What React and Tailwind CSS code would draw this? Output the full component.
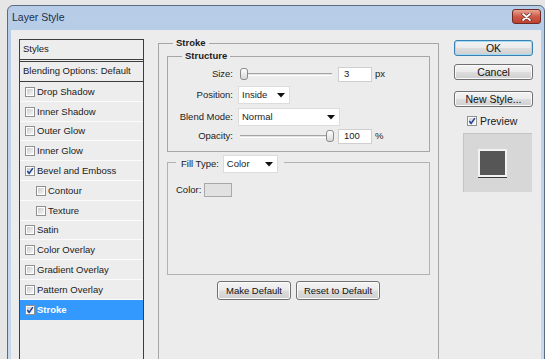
import React from "react";

const FONT = { fontFamily: '"Liberation Sans", Arial, sans-serif' };

function Check({ checked }) {
  return (
    <span className="relative inline-flex w-[10px] h-[10px] shrink-0 border border-[#8e8f8f] bg-white p-[1px]">
      <span className="flex-1 bg-gradient-to-br from-[#cdcdcd] to-[#f7f7f7]" />
      {checked && (
        <svg className="absolute left-0 top-0" width="8" height="8" viewBox="0 0 8 8">
          <path d="M1.3 4.1 L3.1 6.4 L6.9 1.1" fill="none" stroke="#21449a" strokeWidth="1.6" />
        </svg>
      )}
    </span>
  );
}

function Row({ label, checked, indent, selected, short }) {
  return (
    <div
      className={`flex items-center gap-[2px] border-b ${short ? "h-[19px]" : "h-[20px]"} ${
        selected ? "bg-[#3399ff] border-[#3399ff] text-white font-bold" : "border-[#fbfbfb] text-[#1b1b1b]"
      } ${indent ? "pl-[16px]" : "pl-[5px]"}`}
    >
      <Check checked={checked} />
      <span className="leading-none">{label}</span>
    </div>
  );
}

function Arrow() {
  return (
    <svg width="8" height="5" viewBox="0 0 8 5">
      <path d="M0 0 H8 L4 4.5 Z" fill="#111" />
    </svg>
  );
}

function Select({ value, w }) {
  return (
    <div className={`flex items-center justify-between h-[18px] ${w} bg-white border border-[#dcdcdc] pl-[3px] pr-[4px]`}>
      <span className="leading-none">{value}</span>
      <Arrow />
    </div>
  );
}

function Slider({ right }) {
  return (
    <div className="relative w-[96px] h-[16px] flex items-center">
      <div className="mx-[2px] flex-1 h-[3px] border-t border-[#a4a4a4] border-b border-b-white bg-[#e2e2e2]" />
      <span
        className={`absolute top-[2px] ${right ? "left-[88px]" : "left-[2px]"} w-[8px] h-[12px] rounded-[3px] border border-[#8a8a8a] bg-gradient-to-b from-white to-[#d8d8d8]`}
      />
    </div>
  );
}

function Input({ value }) {
  return (
    <div className="flex items-center w-[34px] h-[15px] bg-white border border-[#cfcfcf] pl-[5px] leading-none">
      {value}
    </div>
  );
}

function Btn({ children, w, ok, big }) {
  return (
    <div
      className={`flex items-center justify-center ${w} ${big ? "h-[16px]" : "h-[19px]"} rounded-[3px] border ${
        ok ? "border-[#3c7fb1] shadow-[inset_0_0_0_1px_#9fdcf6]" : "border-[#707070] shadow-[inset_0_0_0_1px_#fbfbfb]"
      } bg-[linear-gradient(to_bottom,#f3f3f3_0%,#ebebeb_48%,#dddddd_52%,#cfcfcf_100%)] text-[#111] leading-none`}
    >
      {children}
    </div>
  );
}

export default function App() {
  return (
    <div className="w-[545px] h-[359px] overflow-hidden bg-[#e6e6e6] text-[9.5px] text-[#1b1b1b]" style={FONT}>
      <div className="ml-[7px] mt-[5px] w-[538px] h-[420px] rounded-t-[6px] border border-[#5b6b80] bg-gradient-to-b from-[#b6cce7] to-[#cbdbee] px-[3px] flex flex-col">
        {/* title bar */}
        <div className="h-[24px] flex items-start justify-between shrink-0">
          <span className="mt-[4px] pl-[1px] text-[10.5px] leading-[14px] text-[#1e3048]">Layer Style</span>
          <div className="mt-[3px] w-[29px] h-[15px] rounded-[3px] border border-[#6e2b25] bg-gradient-to-b from-[#e8a493] via-[#cf5a48] to-[#c0402f] flex items-center justify-center">
            <svg width="11" height="8" viewBox="0 0 11 8">
              <path d="M2 1 L9 7 M9 1 L2 7" stroke="#5b2a25" strokeWidth="3.2" strokeLinecap="round" />
              <path d="M2 1 L9 7 M9 1 L2 7" stroke="#ffffff" strokeWidth="1.8" strokeLinecap="round" />
            </svg>
          </div>
        </div>

        {/* client area */}
        <div className="flex-1 bg-[#ececec] flex items-start pl-[8px] pt-[9px]">
          {/* left styles panel */}
          <div className="w-[125px] h-[400px] shrink-0 border border-[#3d3d3d] bg-[#ededed]">
            <div className="h-[19px] flex items-center pl-[3px]">Styles</div>
            <div className="h-[3px] border-y border-[#3d3d3d]" />
            <div className="h-[20px] flex items-center pl-[3px] border-b border-[#3d3d3d]">Blending Options: Default</div>
            <Row label="Drop Shadow" />
            <Row label="Inner Shadow" />
            <Row label="Outer Glow" short />
            <Row label="Inner Glow" />
            <Row label="Bevel and Emboss" checked />
            <Row label="Contour" indent />
            <Row label="Texture" indent />
            <Row label="Satin" short />
            <Row label="Color Overlay" />
            <Row label="Gradient Overlay" />
            <Row label="Pattern Overlay" />
            <Row label="Stroke" checked selected />
          </div>

          {/* middle stroke group */}
          <fieldset className="ml-[14px] mt-[-2px] w-[281px] h-[400px] shrink-0 border border-[#a6a6a6]">
            <legend className="ml-[14px] px-[3px] font-bold leading-[12px]">Stroke</legend>

            <fieldset className="mx-[8px] mt-[1px] border border-[#a6a6a6] pb-[7px]">
              <legend className="ml-[14px] px-[3px] font-bold leading-[12px]">Structure</legend>

              <div className="mt-[4px] h-[16px] flex items-center">
                <span className="w-[65px] text-right">Size:</span>
                <div className="ml-[5px]">
                  <Slider />
                </div>
                <div className="ml-[4px]">
                  <Input value="3" />
                </div>
                <span className="ml-[3px]">px</span>
              </div>

              <div className="mt-[4px] h-[18px] flex items-center">
                <span className="w-[65px] text-right">Position:</span>
                <div className="ml-[5px]">
                  <Select value="Inside" w="w-[52px]" />
                </div>
              </div>

              <div className="mt-[4px] h-[18px] flex items-center">
                <span className="w-[65px] text-right">Blend Mode:</span>
                <div className="ml-[5px]">
                  <Select value="Normal" w="w-[102px]" />
                </div>
              </div>

              <div className="mt-[2px] h-[16px] flex items-center">
                <span className="w-[65px] text-right">Opacity:</span>
                <div className="ml-[5px]">
                  <Slider right />
                </div>
                <div className="ml-[4px]">
                  <Input value="100" />
                </div>
                <span className="ml-[3px]">%</span>
              </div>
            </fieldset>

            <fieldset className="mx-[8px] mt-[3px] h-[120px] border border-[#b2b2b2]">
              <legend className="ml-[8px] pl-[5px] pr-[6px] h-[14px]">
                <div className="flex items-center gap-[4px] h-[18px]">
                  <span>Fill Type:</span>
                  <Select value="Color" w="w-[55px]" />
                </div>
              </legend>
              <div className="mt-[14px] ml-[8px] h-[14px] flex items-center gap-[3px]">
                <span>Color:</span>
                <span className="w-[28px] h-[14px] border border-[#a9a9a9] bg-[#e1e1e1]" />
              </div>
            </fieldset>

            <div className="mt-[6px] flex justify-center gap-[5px]">
              <Btn w="w-[74px]">Make Default</Btn>
              <Btn w="w-[84px]">Reset to Default</Btn>
            </div>
          </fieldset>

          {/* right column */}
          <div className="ml-[15px] w-[79px] shrink-0 flex flex-col text-[10.5px]">
            <div className="mt-[1px]">
              <Btn w="w-[79px]" ok big>OK</Btn>
            </div>
            <div className="mt-[8px]">
              <Btn w="w-[79px]" big>Cancel</Btn>
            </div>
            <div className="mt-[11px]">
              <Btn w="w-[79px]" big>New Style...</Btn>
            </div>
            <div className="mt-[8px] h-[12px] pl-[13px] flex items-center gap-[3px]">
              <Check checked />
              <span className="leading-none">Preview</span>
            </div>
            <div className="mt-[6px] ml-[9px] w-[69px] h-[59px] bg-[#d7d7d7] border-l border-t border-[#c4c4c4] pl-[14px] pt-[15px]">
              <span className="block w-[29px] h-[28px] border-2 border-[#f2f2f2] bg-[#565656] shadow-[0_1px_0_#3a3a3a]" />
            </div>
          </div>
        </div>
      </div>
    </div>
  );
}
